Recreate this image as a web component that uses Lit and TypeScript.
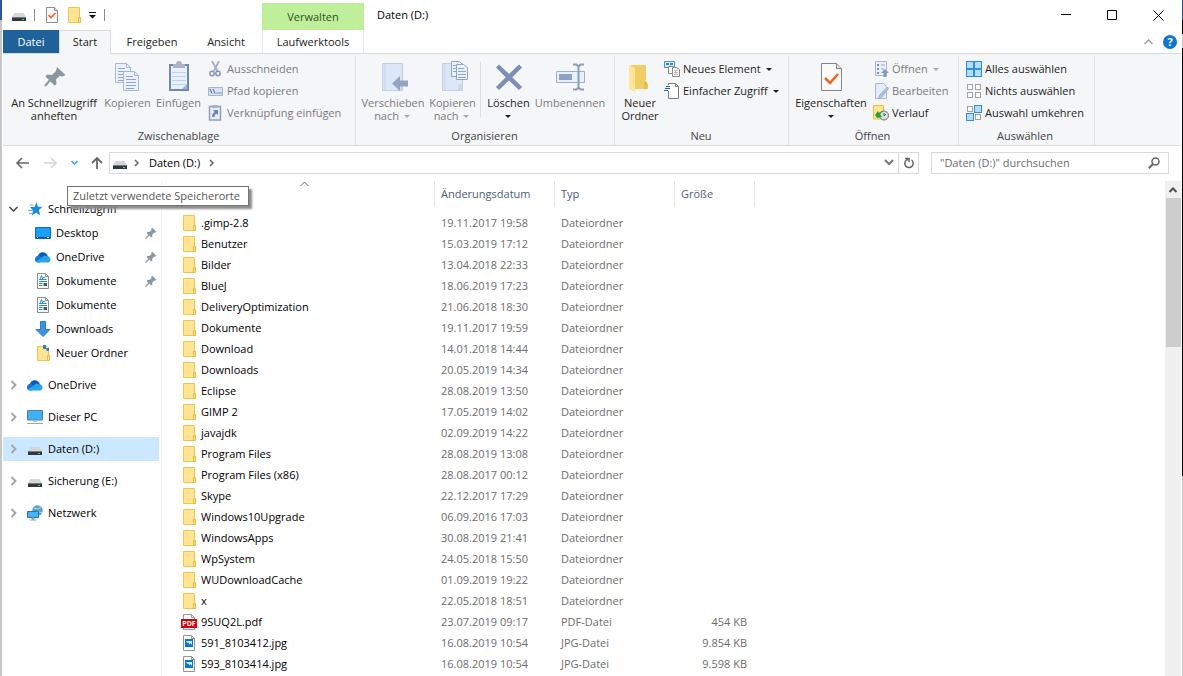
import { LitElement, html, css, svg, nothing, TemplateResult } from "lit";
import { customElement } from "lit/decorators.js";
import { classMap } from "lit/directives/class-map.js";

const icon = (w: number, h: number, body: TemplateResult) =>
  html`<svg class="icon" width=${w} height=${h} viewBox="0 0 ${w} ${h}" aria-hidden="true">${body}</svg>`;

/* Shared glyphs */
const drive = () => icon(16, 16, svg`
  <path d="M3.5 6h9L15 10H1z" fill="#d4d6d9"/><path d="M1 10h14v4H1z" fill="#33363a"/>
  <path d="M1 10h14v1H1z" fill="#777b80"/><rect x="11" y="12" width="2" height="1" fill="#3fe04a"/>`);
const folder = () => icon(16, 16, svg`
  <path d="M2.5.5h11v15h-11z" fill="#ffe593" stroke="#ecc64e"/>
  <path d="M12.5 10.5h2v5h-2z" fill="#ffe082" stroke="#e5bb43"/>`);
const checkDoc = () => icon(16, 16, svg`
  <path d="M2.500.5h8l3 3v12h-11z" fill="#fbfbfb" stroke="#8c8c8c"/><path d="M10.500.5v3h3" fill="#ddd" stroke="#8c8c8c"/>
  <path d="M4.500 8l2.500 2.500 4.500-4.500" fill="none" stroke="#f0602a" stroke-width="1.700"/>`);
const cloud = () => icon(16, 16, svg`
  <path d="M3 7a5 5 0 0 1 9-1.500L14 9 4 10z" fill="#0a5bb5"/>
  <path d="M0 10.500a3.500 3.500 0 0 1 4.500-3.500l6 4-6 2.500H3A3 3 0 0 1 0 10.500z" fill="#1377d1"/>
  <path d="M7 8.500a4 4 0 0 1 5-1.500 3.400 3.400 0 0 1 1.500 6.500H3.500c-1 0-2-.5-2.500-1.300z" fill="#28a3ea"/>`);
const doc = () => icon(16, 16, svg`
  <path d="M2.500.5h8l3 3v12h-11z" fill="#fff" stroke="#8a8d90"/><path d="M10.500.5v3h3" fill="none" stroke="#8a8d90"/>
  <path d="M4 6.500h1l1.500-4 1.500 4M4.500 6.500h7M8 4.500h2M4 8.500h8M4 10.500h3.500M4 12.500h3.500" fill="none" stroke="#2a8ad4"/>
  <path d="M8.500 10h3.500v3H8.500z" fill="#4a5c6c"/>`);
const pinSmall = () => icon(12, 12, svg`
  <path d="M7 .5l4.500 4.500-1.400.8-.8-.2-2 2 .1 2-1 1L1.500 6l1-1 2 .1 2-2-.3-.9z" fill="#8b979f"/>
  <path d="M4 8l-3.500 3.500" stroke="#8b979f" stroke-width="1.300"/>`);
const star = () => icon(16, 16, svg`
  <path d="M9.500 1l1.400 4.800H15.500L11.900 9l1.300 5.500L9.300 11.700l-4.500 2.800 1.400-5L2.800 6H7.500z" fill="#1c8ae0"/>
  <path d="M2.500 4h4M1 9.500h5M2 12.500h3" stroke="#63b5f0"/>`);
const desktop = () => icon(16, 16, svg`
  <path d="M.5 2.500h15v11H.5z" fill="#1aa0f8" stroke="#0d6cb8"/><path d="M1 12h14v1H1z" fill="#0a4f8f"/>
  <path d="M2 12.500h1M12 12.500h2" stroke="#fff"/>`);
const download = () => icon(16, 16, svg`
  <path d="M5.500.5h5v8h4.500L8 15.500 1 8.500h4.500z" fill="#3c92dc" stroke="#2c7ec6"/>`);
const newFolder = () => icon(16, 16, svg`
  <path d="M2.500 1.500h11v14h-11z" fill="#ffe593" stroke="#ecc64e"/><path d="M12.500 10.500h2v5h-2z" fill="#ffe082" stroke="#e5bb43"/>
  <path d="M8 0h3v3h3v3h-2.500V4H8z" fill="#2f7fc4"/><path d="M11 1l3-1v2z" fill="#fff"/>`);
const pc = () => icon(16, 16, svg`
  <path d="M.5 1.500h15v9.500H.5z" fill="#3db2fb" stroke="#5d7f99"/><path d="M6 11h4v2H6z" fill="#a9bccb"/>
  <path d="M0 14.500h16" stroke="#8ea5b8"/>`);
const network = () => icon(16, 16, svg`
  <circle cx="10.500" cy="5.500" r="5.200" fill="#5d9ebf"/><path d="M7 3q3 2 7-.5M7 8q4-2 8-.5" stroke="#b4dcea" fill="none"/>
  <path d="M.5 6.500h11v6H.5z" fill="#43b5fb" stroke="#286fa4"/><path d="M5 13h2v1.500H5zM2.500 15h7" fill="#8fa4b5" stroke="#8fa4b5"/>`);
const pdf = () => icon(16, 16, svg`
  <path d="M2.500.5h8l3 3v12h-11z" fill="#fff" stroke="#999"/><path d="M10.500.5v3h3" fill="none" stroke="#999"/>
  <path d="M0 5h16v9H0z" fill="#d9000d"/>
  <text x="8" y="12" fill="#fff" font-size="7" font-weight="700" text-anchor="middle">PDF</text>`);
const jpg = () => icon(16, 16, svg`
  <path d="M2.500.5h8l3 3v12h-11z" fill="#fff" stroke="#919499"/><path d="M10.500.5v3h3" fill="none" stroke="#919499"/>
  <path d="M4 4h8v8H4z" fill="#0877d2"/><path d="M5 6h6v4L9.500 8 8.500 9.500 7.500 7.500 6.500 8z" fill="#d8efff"/>`);

/* Small ribbon glyphs */
const scissors = () => icon(16, 16, svg`
  <path d="M4 0l5.500 10M11 0L6 10" stroke="#a3afc3" stroke-width="1.800"/>
  <circle cx="4" cy="12.500" r="2.200" fill="none" stroke="#8496b8" stroke-width="1.500"/>
  <circle cx="10" cy="12.500" r="2.200" fill="none" stroke="#8496b8" stroke-width="1.500"/>`);
const path = () => icon(16, 16, svg`
  <path d="M.5 4.500h14v8H.5z" fill="#d6e1f2" stroke="#a5b5d0"/>
  <path d="M2 6l2 4.500M5 6l2 4.500M8.500 10h1.200M10.500 10h1.200M12.500 10h1.200" stroke="#50648a"/>`);
const shortcut = () => icon(16, 16, svg`
  <path d="M1.500 1.500h11v13.500h-11z" fill="#e4edfa" stroke="#8fa0c0" stroke-width="1.500"/><path d="M4 0h6v3H4z" fill="#a5b2ca"/>
  <path d="M5 5h5v5L8.500 8.500c-1.500 1-2 2-2 3.500H4c0-2.500 1-3.700 2.700-5z" fill="#6e82aa"/>`);
const newItem = () => icon(16, 16, svg`
  <path d="M.5.5h10v6H.5z" fill="#cfe6f7" stroke="#4d8fbd"/><path d="M2 2h3v2H2zM6 2h3v2H6z" fill="#3f85b9"/>
  <path d="M4.500 5.500h5v7h-5z" fill="#fff" stroke="#888"/>
  <path d="M8.500 6.500h4l3 2v7h-7z" fill="#fff" stroke="#888"/><path d="M10 9.500h4M10 11.500h4M10 13.500h4" stroke="#e7a3a3"/>
  <path d="M11.500 9v5" stroke="#9ccbe9"/>`);
const easyAccess = () => icon(16, 16, svg`
  <path d="M4.500.5h7l3 3v12h-10z" fill="#fff" stroke="#7d7d7d"/><path d="M11.500.5v3h3" fill="none" stroke="#7d7d7d"/>
  <path d="M1 2h4v6H1z" fill="#f5f6f7"/><path d="M2 3.500h4M1 5.500h5M0 7.500h4" stroke="#1a66ab"/>`);
const openIcon = () => icon(16, 16, svg`
  <path d="M2.500.5h11v14h-11z" fill="#e6eef9" stroke="#a9b6cd"/>
  <path d="M4 3h2v2H4zM4 7h2v2H4zM4 11h2v2H4z" fill="#7e92b6"/><path d="M8 4h4M8 8h3" stroke="#9cabc5"/>
  <path d="M12 8l4 4h-2.500v4h-3v-4H8z" fill="#8698ba"/>`);
const editIcon = () => icon(16, 16, svg`
  <path d="M2.500.5h8l3 3v12h-11z" fill="#e2ecfa" stroke="#a9b8d1"/><path d="M14.500 4l1.300 1.500-7 8.500-3 1 .8-3z" fill="#b2c0d8" stroke="#8fa1c0" stroke-width=".7"/>`);
const history = () => icon(16, 16, svg`
  <path d="M.5.500h10v13.500H.5z" fill="#ffe593" stroke="#e7c04a"/>
  <circle cx="11" cy="10.500" r="4.500" fill="#ddd" stroke="#777"/><path d="M11 8v3l2-2" stroke="#555" fill="none"/>
  <path d="M2 10l3-4 1 2c1.500-2 3.500-2 4.500-1.500-2 .4-3 1.500-3.300 3L9 12l-5 1z" fill="#22a437"/>`);
const cell = (x: number, y: number, on: boolean) => on
  ? svg`<rect x=${x + 0.5} y=${y + 0.5} width="7" height="7" fill="#b8dcf8" stroke="#2b8fe6"/>`
  : svg`<rect x=${x + 0.5} y=${y + 0.5} width="5" height="5" fill="#fdfdfd" stroke="#a3a3a3"/>`;
const selAll = () => icon(16, 16, svg`
  <rect width="16" height="16" fill="#2b8fe6"/>
  <path d="M1 1h6v6H1zM9 1h6v6H9zM1 9h6v6H1zM9 9h6v6H9z" fill="#b5dcfa"/>`);
const selNone = () => icon(16, 16, svg`${cell(1, 1, false)}${cell(9, 1, false)}${cell(1, 9, false)}${cell(9, 9, false)}`);
const selInv = () => icon(16, 16, svg`${cell(1, 1, false)}${cell(8, 0, true)}${cell(0, 8, true)}${cell(9, 9, false)}`);

/* Large ribbon glyphs */
const page = (x: number, y: number) => svg`
  <path d="M${x + 0.5} ${y + 0.5}h11l4 4v15h-15z" fill="#eaf1fb" stroke="#a9b8d4"/>
  <path d="M${x + 11.5} ${y + 0.5}v4h4" fill="none" stroke="#a9b8d4"/>
  <path d="M${x + 3} ${y + 5.5}h7M${x + 3} ${y + 8.5}h10M${x + 3} ${y + 11.5}h10M${x + 3} ${y + 14.5}h10M${x + 3} ${y + 17.5}h8" stroke="#93a5c4"/>`;
const pinLarge = () => icon(32, 32, svg`
  <path d="M19 6l8.500 8-3 1.500-3-.5-3.500 3.500.5 4.500-2 1.500-9-9 1.500-2 5 .5 4-4z" fill="#8b979f"/>
  <path d="M13 18l-6 7" stroke="#8b979f" stroke-width="2"/>`);
const copyLarge = () => icon(32, 32, svg`${page(3, 2)}${page(11, 10)}`);
const pasteLarge = () => icon(32, 32, svg`
  <path d="M7 4h18v25H7z" fill="#e8f0fb" stroke="#7187b3" stroke-width="2"/>
  <path d="M10 3h3a3 3 0 0 1 6 0h3v4H10z" fill="#a9b4c9"/>
  <path d="M9 11.500h14M9 15.500h14M9 19.500h14M9 23.500h14" stroke="#c2d1e8"/><path d="M19 28l5-5v5z" fill="#a4b6d5"/>`);
const moveLarge = () => icon(32, 32, svg`
  <path d="M5.500 2.500h20v27h-20z" fill="#dde8f6" stroke="#c1cfe4"/><path d="M8 3v26M22 24h3v5h-3z" stroke="#c4d3e9" fill="#d0dded"/>
  <path d="M15 22.500l8-7.500v4.500h8v6h-8V30z" fill="#94a5c4"/>`);
const copyToLarge = () => icon(32, 32, svg`
  <path d="M5.500 2.500h20v27h-20z" fill="#dde8f6" stroke="#c1cfe4"/><path d="M8 3v26M22 24h3v5h-3z" stroke="#c4d3e9" fill="#d0dded"/>
  <path d="M14.500.5h8l3 3v12h-11z" fill="#eaf1fb" stroke="#93a5c4"/><path d="M16 4.500h6M16 7.500h6M16 10.500h6" stroke="#93a5c4"/>
  <path d="M19.500 3.500h7l4 3v12h-11z" fill="#eaf1fb" stroke="#93a5c4"/><path d="M21 7.500h6M21 10.500h8M21 13.500h8M21 16.500h8" stroke="#93a5c4"/>`);
const deleteLarge = () => icon(32, 32, svg`<path d="M4.500 5l23 22.500M27.500 5l-23 22.500" stroke="#7b8fb4" stroke-width="4.500"/>`);
const renameLarge = () => icon(32, 32, svg`
  <path d="M2.500 10.500h28v11h-28z" fill="#e8f0fb" stroke="#9eafcd"/><path d="M5 13h13v6H5z" fill="#8fa2c4"/>
  <path d="M24.500 5v22M19 3.500h3.500l2 2 2-2H30M19 28.500h3.500l2-2 2 2H30" fill="none" stroke="#899cbe" stroke-width="2"/>`);
const folderLarge = () => icon(32, 32, svg`
  <path d="M7 4h15v18l2 1v5H10z" fill="#f1cd66"/><path d="M5 4l6 3v24l-6-3z" fill="#ffe49a"/><path d="M20 21h3v7h-3z" fill="#e6bd4d"/>`);
const propsLarge = () => icon(32, 32, svg`
  <path d="M6.500 2.500h15l5 5v22h-20z" fill="#fafafa" stroke="#858585"/><path d="M21.500 2.500v5h5" fill="#ddd" stroke="#858585"/>
  <path d="M10 17l5 5 8-9" fill="none" stroke="#f4621f" stroke-width="2.500"/>`);

const stroke = (w: number, h: number, d: string, color: string, sw = 1.5) =>
  icon(w, h, svg`<path d=${d} fill="none" stroke=${color} stroke-width=${sw}/>`);
const caret = () => html`<span class="caret"></span>`;

interface Entry { name: string; date: string; type: string; size?: string; icon: () => TemplateResult; }
const folders: [string, string][] = [
  [".gimp-2.8", "19.11.2017 19:58"], ["Benutzer", "15.03.2019 17:12"], ["Bilder", "13.04.2018 22:33"],
  ["BlueJ", "18.06.2019 17:23"], ["DeliveryOptimization", "21.06.2018 18:30"], ["Dokumente", "19.11.2017 19:59"],
  ["Download", "14.01.2018 14:44"], ["Downloads", "20.05.2019 14:34"], ["Eclipse", "28.08.2019 13:50"],
  ["GIMP 2", "17.05.2019 14:02"], ["javajdk", "02.09.2019 14:22"], ["Program Files", "28.08.2019 13:08"],
  ["Program Files (x86)", "28.08.2017 00:12"], ["Skype", "22.12.2017 17:29"], ["Windows10Upgrade", "06.09.2016 17:03"],
  ["WindowsApps", "30.08.2019 21:41"], ["WpSystem", "24.05.2018 15:50"], ["WUDownloadCache", "01.09.2019 19:22"],
  ["x", "22.05.2018 18:51"],
];
const entries: Entry[] = [
  ...folders.map(([name, date]) => ({ name, date, type: "Dateiordner", icon: folder })),
  { name: "9SUQ2L.pdf", date: "23.07.2019 09:17", type: "PDF-Datei", size: "454 KB", icon: pdf },
  { name: "591_8103412.jpg", date: "16.08.2019 10:54", type: "JPG-Datei", size: "9.854 KB", icon: jpg },
  { name: "593_8103414.jpg", date: "16.08.2019 10:54", type: "JPG-Datei", size: "9.598 KB", icon: jpg },
];

interface Place { label: string; icon: () => TemplateResult; pinned?: boolean; selected?: boolean; }
const quick: Place[] = [
  { label: "Desktop", icon: desktop, pinned: true }, { label: "OneDrive", icon: cloud, pinned: true },
  { label: "Dokumente", icon: doc, pinned: true }, { label: "Dokumente", icon: doc },
  { label: "Downloads", icon: download }, { label: "Neuer Ordner", icon: newFolder },
];
const roots: Place[] = [
  { label: "OneDrive", icon: cloud }, { label: "Dieser PC", icon: pc },
  { label: "Daten (D:)", icon: drive, selected: true }, { label: "Sicherung (E:)", icon: drive },
  { label: "Netzwerk", icon: network },
];

const base = css`
  * { box-sizing: border-box; }
  button, input { font: inherit; color: inherit; border: 0; padding: 0; margin: 0; background: none; }
  a { color: inherit; text-decoration: none; }
  .icon { display: block; flex: none; }
  .caret { display: inline-block; border: 3px solid transparent; border-top-color: currentColor; border-bottom: 0; }
`;

@customElement("explorer-ribbon")
export class ExplorerRibbon extends LitElement {
  static styles = [base, css`
    :host { display: flex; background: #f5f6f7; border-block: 1px solid #dadbdc; color: #1e1e1e; }
    .group { display: flex; flex-direction: column; border-right: 1px solid #e0e1e3; margin-top: 2px; padding-left: 3px; }
    .clip { width: 353px; } .organize { width: 259px; } .new { width: 174px; } .open { width: 170px; padding-left: 2px; }
    .select { width: 136px; padding-left: 5px; }
    .body { display: flex; height: 71px; }
    .caption { line-height: 18px; text-align: center; color: #444; padding-right: 4px; }
    .big { display: flex; flex-direction: column; align-items: center; padding-top: 5px; line-height: 13px; white-space: nowrap; }
    .big .icon { margin-bottom: 3px; }
    .big .caret { margin-inline: 2px; vertical-align: 2px; }
    .w45 { width: 44px; } .w50 { width: 51px; } .w68 { width: 68px; } .w75 { width: 72px; } .w80 { width: 80px; } .w96 { width: 96px; }
    .stack { display: flex; flex-direction: column; padding: 2px 0 0 2px; }
    .clip .stack { padding-left: 4px; }
    .select .caption { padding-right: 8px; }
    .small { display: flex; align-items: center; gap: 3px; height: 22px; white-space: nowrap; }
    .small .caret { margin-left: 2px; }
    .rule { width: 1px; margin: 6px 2px 10px; background: #dcdde0; }
    button:disabled { color: #7b7b7b; }
    button:disabled .caret { color: #aaa; }
  `];

  private big(ic: () => TemplateResult, width: string, text: unknown, disabled = false) {
    return html`<button class="big ${width}" ?disabled=${disabled}>${ic()}<span>${text}</span></button>`;
  }
  private small(ic: () => TemplateResult, text: string, disabled = false, menu = false) {
    return html`<button class="small" ?disabled=${disabled}>${ic()}<span>${text}</span>${menu ? caret() : nothing}</button>`;
  }
  render() {
    return html`
      <section class="group clip"><div class="body">
        ${this.big(pinLarge, "w96", html`An Schnellzugriff<br>anheften`)}
        ${this.big(copyLarge, "w50", "Kopieren", true)}
        ${this.big(pasteLarge, "w50", "Einfügen", true)}
        <div class="stack">${this.small(scissors, "Ausschneiden", true)}${this.small(path, "Pfad kopieren", true)}${this.small(shortcut, "Verknüpfung einfügen", true)}</div>
      </div><div class="caption">Zwischenablage</div></section>
      <section class="group organize"><div class="body">
        ${this.big(moveLarge, "w68", html`Verschieben<br>nach ${caret()}`, true)}
        ${this.big(copyToLarge, "w50", html`Kopieren<br>nach ${caret()}`, true)}
        <span class="rule"></span>
        ${this.big(deleteLarge, "w50", html`Löschen<br>${caret()}`)}
        ${this.big(renameLarge, "w75", "Umbenennen", true)}
      </div><div class="caption">Organisieren</div></section>
      <section class="group new"><div class="body">
        ${this.big(folderLarge, "w45", html`Neuer<br>Ordner`)}
        <div class="stack">${this.small(newItem, "Neues Element", false, true)}${this.small(easyAccess, "Einfacher Zugriff", false, true)}</div>
      </div><div class="caption">Neu</div></section>
      <section class="group open"><div class="body">
        ${this.big(propsLarge, "w80", html`Eigenschaften<br>${caret()}`)}
        <div class="stack">${this.small(openIcon, "Öffnen", true, true)}${this.small(editIcon, "Bearbeiten", true)}${this.small(history, "Verlauf")}</div>
      </div><div class="caption">Öffnen</div></section>
      <section class="group select"><div class="body">
        <div class="stack">${this.small(selAll, "Alles auswählen")}${this.small(selNone, "Nichts auswählen")}${this.small(selInv, "Auswahl umkehren")}</div>
      </div><div class="caption">Auswählen</div></section>`;
  }
}

@customElement("explorer-tree")
export class ExplorerTree extends LitElement {
  static styles = [base, css`
    :host { display: block; width: 159px; padding: 16px 2px 0 0; border-right: 1px solid #f0f0f0; flex: none; color: #000; }
    ul { list-style: none; margin: 0; padding: 0; }
    a { display: flex; align-items: center; height: 24px; gap: 5px; padding-left: 5px; }
    .chevron { width: 14px; }
    .child { padding-left: 32px; }
    .root { margin-top: 8px; }
    .selected { background: #cce8ff; }
    .pin { margin-left: auto; padding-right: 2px; }
  `];
  render() {
    return html`<nav aria-label="Navigationsbereich"><ul>
      <li><a href="#schnellzugriff"><span class="chevron">${stroke(11, 10, "M1.500 3l4 4 4-4", "#444")}</span>${star()}<span>Schnellzugriff</span></a></li>
      ${quick.map((p) => html`<li><a class="child" href="#ordner">${p.icon()}<span>${p.label}</span>${p.pinned ? html`<span class="pin">${pinSmall()}</span>` : nothing}</a></li>`)}
      ${roots.map((p) => html`<li class="root"><a class=${classMap({ selected: !!p.selected })} href="#laufwerk">
        <span class="chevron">${stroke(11, 10, "M3.500 1l4 4-4 4", "#a3a3a3", 1.8)}</span>${p.icon()}<span>${p.label}</span></a></li>`)}
    </ul></nav>`;
  }
}

@customElement("explorer-list")
export class ExplorerList extends LitElement {
  static styles = [base, css`
    :host { display: flex; flex: 1; min-width: 0; overflow: hidden; }
    .scroll { flex: 1; overflow: hidden; }
    table { width: 593px; table-layout: fixed; border-collapse: separate; border-spacing: 0; color: #6d6d6d; }
    .name { width: 273px; } .date, .type { width: 120px; } .size { width: 80px; }
    th { height: 26px; padding: 0 6px; font-weight: 400; text-align: left; color: #4c607a; border-right: 1px solid #e5e5e5; }
    th.name { vertical-align: top; padding: 0 0 0 138px; }
    tbody::before { content: ""; display: block; height: 5px; }
    td { height: 21px; padding: 0 6px; white-space: nowrap; }
    td:first-child { padding-left: 19px; color: #000; }
    td:last-child { text-align: right; padding-right: 8px; }
    .file { display: flex; align-items: center; gap: 4px; }
    .bar { width: 16px; flex: none; background: #f0f0f0; display: flex; flex-direction: column; align-items: center; }
    .up { width: 16px; height: 17px; display: grid; place-items: center; }
    .thumb { width: 15px; height: 30%; background: #cdcdcd; }
    text { font-family: "Open Sans", sans-serif; }
  `];
  render() {
    return html`
      <div class="scroll"><table>
        <thead><tr><th class="name" aria-label="Name" aria-sort="ascending">${stroke(9, 6, "M.5 5l4-4 4 4", "#666", 1)}</th><th class="date">Änderungsdatum</th><th class="type">Typ</th><th class="size">Größe</th></tr></thead>
        <tbody>${entries.map((e) => html`<tr><td><div class="file">${e.icon()}<span>${e.name}</span></div></td><td>${e.date}</td><td>${e.type}</td><td>${e.size ?? ""}</td></tr>`)}</tbody>
      </table></div>
      <div class="bar"><button class="up" aria-label="Nach oben">${stroke(8, 6, "M.5 5L4 1.500 7.500 5", "#505050", 2)}</button><div class="thumb"></div></div>`;
  }
}

@customElement("app-root")
export class AppRoot extends LitElement {
  static styles = [base, css`
    :host { display: flex; height: 100vh; overflow: hidden; background: #fff; color: #222; font: 11px/16px "Open Sans", "Noto Sans", sans-serif; }
    .edge-left { width: 2px; flex: none; margin-right: 1px; background: linear-gradient(#2b579a 20px, #c6c6c6 20px); }
    .edge-right { width: 1px; flex: none; margin-left: 1px; background: linear-gradient(#1c4f91 20px, #000 20px 34px, #ccc 34px 48px, #000 48px 476px, #c4c4c4 476px); }
    .window { flex: 1; min-width: 0; display: flex; flex-direction: column; }
    .title { display: flex; height: 30px; }
    .quickbar { width: 259px; display: flex; align-items: center; padding-left: 8px; }
    .sep { width: 1px; height: 12px; background: #8c8c8c; margin-inline: 7px 9px; }
    .quickbar .gap { margin-left: 6px; }
    .quickbar .menu { margin: 0 0 0 6px; }
    .context { width: 102px; margin-top: 3px; display: grid; place-items: center; background: #c0ef9c; color: #33511f; }
    .caption { margin-left: 13px; line-height: 30px; color: #000; flex: 1; }
    .win { width: 46px; display: grid; place-items: center; }
    .tabs { display: flex; height: 23px; }
    .tab { display: grid; place-items: center; height: 23px; }
    .file { width: 56px; background: #1e6299; color: #fff; }
    .active { width: 52px; height: 24px; background: #f5f6f7; border: 1px solid #dadbdc; border-bottom: 0; z-index: 1; padding-bottom: 2px; }
    .share { width: 82px; } .view { width: 66px; }
    .tools { width: 102px; margin-left: 3px; border-inline: 1px solid #e8e8e8; }
    .help { margin-left: auto; display: flex; align-items: center; gap: 10px; padding-right: 4px; }
    .question { width: 14px; height: 14px; border-radius: 50%; background: #0a78d4; color: #fff; font-weight: 700; line-height: 14px; text-align: center; }
    .nav { display: flex; align-items: center; height: 35px; padding: 0 12px 2px; position: relative; }
    .arrows { display: flex; align-items: center; width: 94px; gap: 13px; }
    .address { flex: 1; display: flex; align-items: center; height: 22px; border: 1px solid #d9d9d9; padding-left: 2px; }
    .crumb { padding-inline: 9px; color: #000; }
    .chev { padding-left: 6px; }
    .drop { margin-left: auto; padding-right: 4px; }
    .reload { width: 20px; height: 20px; display: grid; place-items: center; border-left: 1px solid #d9d9d9; }
    .search { width: 238px; height: 22px; margin-left: 12px; border: 1px solid #d9d9d9; display: flex; align-items: center; padding: 0 8px; }
    .search input { flex: 1; min-width: 0; outline: 0; }
    .search input::placeholder { color: #6d6d6d; opacity: 1; }
    .tip { position: absolute; left: 64px; top: 40px; z-index: 2; height: 20px; padding: 0 5px; line-height: 18px; width: 182px; white-space: nowrap; border: 1px solid #767676; background: #fff; color: #575757; box-shadow: 3px 3px 2px #8c8c8c; }
    .content { flex: 1; min-height: 0; display: flex; }
  `];
  render() {
    return html`
      <div class="edge-left"></div>
      <div class="window">
        <header class="title">
          <div class="quickbar">
            ${drive()}<span class="sep"></span>
            <button aria-label="Eigenschaften">${checkDoc()}</button>
            <button class="gap" aria-label="Neuer Ordner">${folder()}</button>
            <button class="menu" aria-label="Symbolleiste anpassen">${icon(9, 8, svg`<path d="M1 1.500h7" stroke="#111"/><path d="M1 4h7L4.500 7.500z" fill="#111"/>`)}</button>
            <span class="sep"></span>
          </div>
          <div class="context">Verwalten</div>
          <div class="caption">Daten (D:)</div>
          <button class="win" aria-label="Minimieren">${stroke(10, 10, "M0 4.500h10", "#000", 1)}</button>
          <button class="win" aria-label="Maximieren">${stroke(10, 10, "M.5.5h9v9h-9z", "#000", 1)}</button>
          <button class="win" aria-label="Schließen">${stroke(11, 11, "M.5.5l10 10M10.500.5l-10 10", "#000", 1)}</button>
        </header>
        <div class="tabs">
          <button class="tab file">Datei</button><button class="tab active">Start</button>
          <button class="tab share">Freigeben</button><button class="tab view">Ansicht</button>
          <button class="tab tools">Laufwerktools</button>
          <div class="help"><button aria-label="Menüband minimieren">${stroke(9, 6, "M.5 5l4-4 4 4", "#999", 1.3)}</button><button class="question" aria-label="Hilfe">?</button></div>
        </div>
        <explorer-ribbon></explorer-ribbon>
        <div class="nav">
          <div class="arrows">
            <button aria-label="Zurück">${stroke(15, 12, "M14 6H2M7 1L2 6l5 5", "#666")}</button>
            <button aria-label="Vorwärts">${stroke(15, 12, "M1 6h12M8 1l5 5-5 5", "#d6d6d6")}</button>
            <button aria-label="Zuletzt verwendete Speicherorte">${stroke(7, 5, "M.5 1l3 3 3-3", "#3e9bea")}</button>
            <button aria-label="Nach oben">${stroke(12, 14, "M6 13V2M1 7l5-5 5 5", "#666", 1.8)}</button>
          </div>
          <div class="address">
            ${drive()}<span class="chev">${stroke(6, 8, "M1 1l3 3-3 3", "#666")}</span>
            <a class="crumb" href="#daten">Daten (D:)</a>${stroke(6, 8, "M1 1l3 3-3 3", "#666")}
            <button class="drop" aria-label="Vorherige Speicherorte">${stroke(10, 7, "M1 1l4 4 4-4", "#777", 2)}</button>
            <button class="reload" aria-label="Aktualisieren">${icon(12, 12, svg`<path d="M8.500 3a4.200 4.200 0 1 1-5 0L5.500 2" fill="none" stroke="#666" stroke-width="1.500"/><path d="M2 1.500h4V5" fill="none" stroke="#666" stroke-width="1.500"/>`)}</button>
          </div>
          <label class="search"><input type="text" aria-label="Suchen" placeholder='"Daten (D:)" durchsuchen'>${icon(12, 12, svg`<circle cx="7.500" cy="4.500" r="3.500" fill="none" stroke="#666" stroke-width="1.500"/><path d="M5 7L.8 11.200" stroke="#666" stroke-width="2"/>`)}</label>
          <div class="tip" role="tooltip">Zuletzt verwendete Speicherorte</div>
        </div>
        <main class="content"><explorer-tree></explorer-tree><explorer-list></explorer-list></main>
      </div>
      <div class="edge-right"></div>`;
  }
}
